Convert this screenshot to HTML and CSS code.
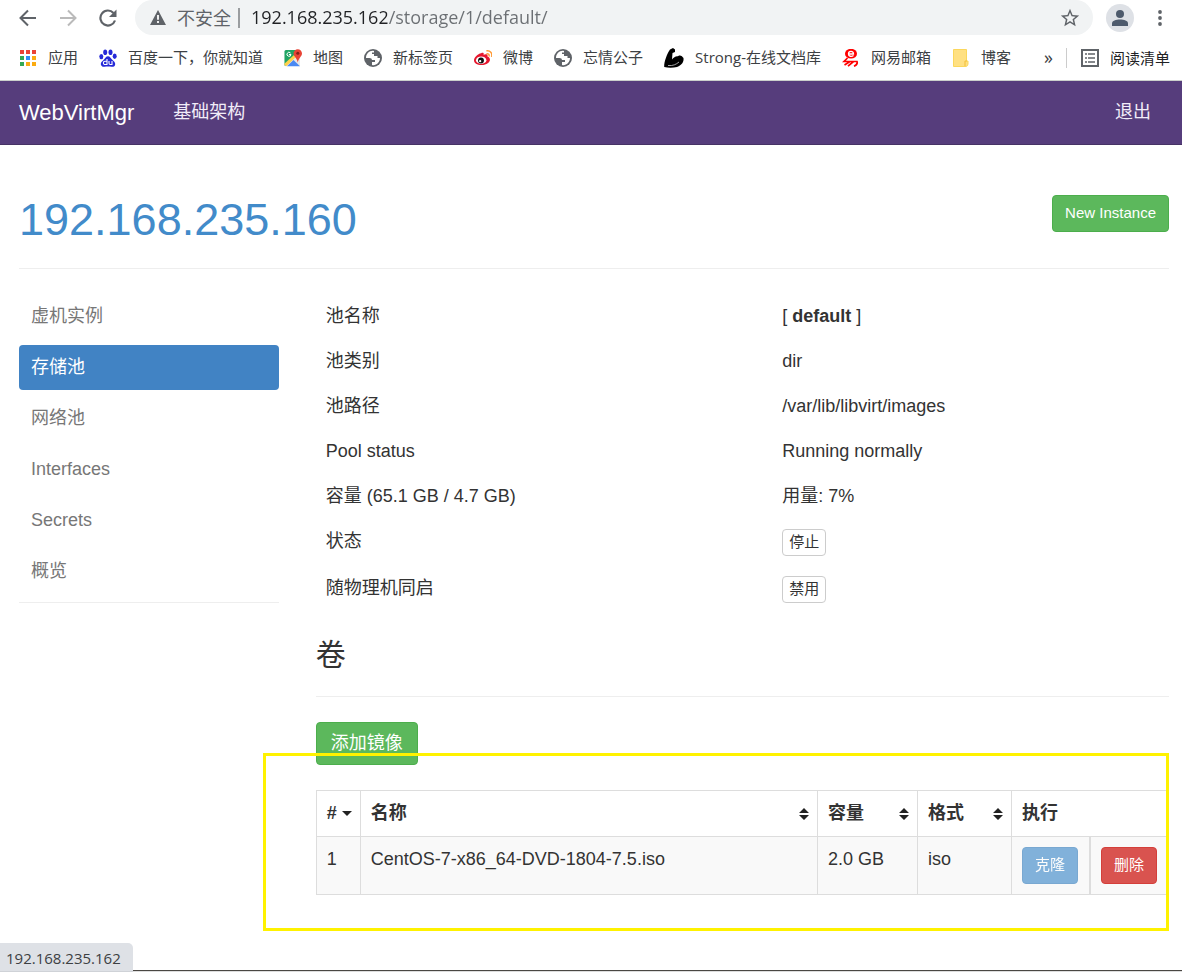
FILE: index.html
```html
<!DOCTYPE html>
<html lang="zh-CN">
<head>
    <meta charset="UTF-8">
    <meta name="viewport" content="width=device-width, initial-scale=1.0">
    <title>WebVirtMgr</title>
    <link rel="stylesheet" href="styles.css">
</head>
<body>
    <header class="browser">
        <div class="toolbar">
            <button class="tool" aria-label="后退">
                <svg width="18" height="18" viewBox="0 0 18 18" fill="none" stroke="#5f6368" stroke-width="2"><path d="M17 9H2M9 1.500L1.500 9l7.500 7.500"/></svg>
            </button>
            <button class="tool" aria-label="前进">
                <svg width="18" height="18" viewBox="0 0 18 18" fill="none" stroke="#bababa" stroke-width="2"><path d="M1 9h15M9 1.500L16.500 9 9 16.500"/></svg>
            </button>
            <button class="tool" aria-label="重新加载">
                <svg width="18" height="18" viewBox="0 0 18 18"><path d="M14.500 4A7.500 7.500 0 1 0 16 11.500" fill="none" stroke="#5f6368" stroke-width="2.200"/><path d="M17.500 .500v7.500H10z" fill="#5f6368"/></svg>
            </button>
            <div class="omnibox">
                <button class="security">
                    <svg width="16" height="15" viewBox="0 0 16 15"><path d="M8 0l8 15H0z" fill="#5f6368"/><path d="M7.100 5h1.800v4.800H7.100zM7.100 11h1.800v1.900H7.100z" fill="#fff"/></svg>
                    <span>不安全</span>
                </button>
                <input class="address" type="text" aria-label="地址" value="192.168.235.162/storage/1/default/">
                <button class="star" aria-label="收藏">
                    <svg width="22" height="22" viewBox="0 0 24 24" fill="#5f6368"><path d="M22 9.240l-7.190-.620L12 2 9.190 8.630 2 9.240l5.460 4.730L5.820 21 12 17.270 18.180 21l-1.630-7.030L22 9.240zM12 15.400l-3.760 2.270 1-4.280-3.320-2.880 4.380-.380L12 6.100l1.710 4.040 4.380.380-3.320 2.880 1 4.280L12 15.400z"/></svg>
                </button>
            </div>
            <button class="avatar" aria-label="用户">
                <svg width="16" height="16" viewBox="0 0 16 16" fill="#4d5a6c"><circle cx="8" cy="4" r="4"/><path d="M0 16v-2.500C0 10.500 4 9.500 8 9.500s8 1 8 4V16z"/></svg>
            </button>
            <button class="more" aria-label="更多">
                <svg width="4" height="16" viewBox="0 0 4 16" fill="#5f6368"><circle cx="2" cy="2" r="1.900"/><circle cx="2" cy="8" r="1.900"/><circle cx="2" cy="14" r="1.900"/></svg>
            </button>
        </div>

        <nav class="bookmarks">
            <a href="#">
                <svg width="18" height="18" viewBox="0 0 18 18"><path d="M1 1h4v4H1zM7 1h4v4H7zM13 1h4v4h-4z" fill="#ea4335"/><path d="M1 7h4v4H1zM1 13h4v4H1z" fill="#34a853"/><path d="M7 7h4v4H7z" fill="#2f8df5"/><path d="M13 7h4v4h-4zM7 13h4v4H7zM13 13h4v4h-4z" fill="#fbab10"/></svg>
                应用
            </a>
            <a href="#">
                <svg width="18" height="18" viewBox="0 0 18 18"><g fill="#2529d8"><ellipse cx="2.300" cy="7.600" rx="2" ry="2.700"/><ellipse cx="6.200" cy="3.200" rx="2" ry="2.800"/><ellipse cx="11.500" cy="3.200" rx="2" ry="2.800"/><ellipse cx="15.700" cy="7.200" rx="2" ry="2.700"/><path d="M9 7.200c2 0 2.800 2 4 3.200 1.800 1.800 3.400 2.600 3.200 4.800-.200 2-1.700 2.800-3.700 2.500-2.400-.400-4.600-.400-7 0-2 .300-3.500-.700-3.700-2.500-.200-2.200 1.500-3 3.200-4.800C6.200 9.200 7 7.200 9 7.200z"/></g><path d="M8 10v5.500H6a1.500 1.500 0 0 1 0-3.200h2M10 12v2.300q0 1.200 1.200 1.200h1.800V12" fill="none" stroke="#fff" stroke-width="1.100"/></svg>
                百度一下，你就知道
            </a>
            <a href="#">
                <svg width="18" height="18" viewBox="0 0 18 18"><path d="M2 1h14v16H2q-1.500 0-1.500-1.500v-13Q.500 1 2 1z" fill="#e8e8e8"/><path d="M2 1h10L11 8 1 17Q.500 16.500.500 15.500v-13Q.500 1 2 1z" fill="#1fa463"/><path d="M0 15L10 6l2 2-10 9.500z" fill="#ffd04b"/><path d="M3 17.200l6.500-6.200 6.500 6.200z" fill="#4a89f3"/><path d="M9.500 4.500a4.200 4.200 0 0 1 8.500 0c0 3-3.300 4-4.200 9-1-5-4.300-6-4.300-9z" fill="#e84335"/><circle cx="13.800" cy="4.300" r="1.500" fill="#801f18"/><path d="M6.500 4A2 2 0 1 0 7 5.500H5" fill="none" stroke="#fff"/></svg>
                地图
            </a>
            <a href="#">
                <svg width="18" height="18" viewBox="0 0 18 18"><circle cx="9" cy="9" r="9" fill="#5f6368"/><path d="M10 2C6 1 2 4.500 2 9h3.500q2.500 0 2.500 2h3v2H8v3c4 1 8-2.500 8-7h-2.500V7H10V5H8V3.500h2z" fill="#fff"/></svg>
                新标签页
            </a>
            <a href="#">
                <svg width="18" height="18" viewBox="0 0 19 18"><path d="M7.500 4c2-1.200 3.300-.300 2.500 1.600 2-.900 5-1 4.200 1.700 5.500 2.200 2 9.200-6.200 9.200-5 0-8-2-8-5C0 8.500 4 4.500 7.500 4z" fill="#e6162d"/><ellipse cx="7.600" cy="11.300" rx="5.500" ry="4" fill="#fff"/><circle cx="7.400" cy="11.700" r="3.100" fill="#111"/><circle cx="6.500" cy="12.400" r="1.200" fill="#fff"/><path d="M13 1.500c4-.800 6.800 2.500 5.500 6.300M13.200 4.500c2-.400 3.300 1 2.600 2.800" fill="none" stroke="#ff9933" stroke-width="1.500"/></svg>
                微博
            </a>
            <a href="#">
                <svg width="18" height="18" viewBox="0 0 18 18"><circle cx="9" cy="9" r="9" fill="#5f6368"/><path d="M10 2C6 1 2 4.500 2 9h3.500q2.500 0 2.500 2h3v2H8v3c4 1 8-2.500 8-7h-2.500V7H10V5H8V3.500h2z" fill="#fff"/></svg>
                忘情公子
            </a>
            <a href="#">
                <svg width="20" height="20" viewBox="0 0 20 20"><path d="M6 1.500L9 0l2 1.500V4L8.500 5 8 11.500C11 7.500 13.500 9 15 7.500c2-.500 3.500 1 4.500 2.500.500 4-1.500 7-6.500 9-4 1-9 1-12.800 0C0 13.500 3 6 6 1.500z" fill="#000"/><path d="M4 17.500c5 .500 8-1 11-3.500" fill="none" stroke="#ccc" stroke-width=".800"/></svg>
                Strong-在线文档库
            </a>
            <a href="#">
                <svg width="18" height="18" viewBox="0 0 18 18"><ellipse cx="9" cy="4.700" rx="6" ry="4.900" fill="#f00"/><path d="M6.500 5h5c0-3.500-5-3.500-5 0 0 2.500 3 3 5 1.500" fill="none" stroke="#fff" stroke-width="1.300"/><path d="M5.500 9L2 12.500h13q1 3-3 4.700M8 12.500L2.500 16M11.500 12.500L6 17.200" fill="none" stroke="#f00" stroke-width="1.700"/></svg>
                网易邮箱
            </a>
            <a href="#">
                <svg width="18" height="18" viewBox="0 0 18 18"><path d="M1.500.500h13v11.500h1.500v3q0 2-2 2.500H1.500z" fill="#ffe082" stroke="#fbd75c"/><path d="M13 17v-5h2" fill="none" stroke="#f2bf36"/></svg>
                博客
            </a>
            <button class="overflow" aria-label="更多书签">»</button>
            <a class="reading" href="#">
                <svg width="18" height="18" viewBox="0 0 18 18"><path d="M1 1h16v16H1z" fill="none" stroke="#5f6368" stroke-width="2"/><path d="M4 5h2M7 5h7M4 9h2M7 9h7M4 13h2M7 13h7" stroke="#5f6368" stroke-width="1.600"/></svg>
                阅读清单
            </a>
        </nav>
    </header>

    <nav class="navbar">
        <a class="brand" href="#">WebVirtMgr</a>
        <a href="#">基础架构</a>
        <a class="logout" href="#">退出</a>
    </nav>

    <main class="container">
        <div class="page-header">
            <h1><a href="#">192.168.235.160</a></h1>
            <button class="btn btn-success">New Instance</button>
        </div>

        <div class="row">
            <nav class="sidebar">
                <a href="#">虚机实例</a>
                <a class="active" href="#">存储池</a>
                <a href="#">网络池</a>
                <a href="#">Interfaces</a>
                <a href="#">Secrets</a>
                <a href="#">概览</a>
            </nav>

            <section class="content">
                <table class="details">
                    <tr><td>池名称</td><td>[ <b>default</b> ]</td></tr>
                    <tr><td>池类别</td><td>dir</td></tr>
                    <tr><td>池路径</td><td>/var/lib/libvirt/images</td></tr>
                    <tr><td>Pool status</td><td>Running normally</td></tr>
                    <tr><td>容量 (65.1 GB / 4.7 GB)</td><td>用量: 7%</td></tr>
                    <tr><td>状态</td><td><button class="btn btn-xs">停止</button></td></tr>
                    <tr><td>随物理机同启</td><td><button class="btn btn-xs">禁用</button></td></tr>
                </table>

                <h2>卷</h2>
                <button class="btn btn-success btn-lg">添加镜像</button>

                <div class="volumes-wrap">
                    <table class="volumes">
                        <thead>
                            <tr>
                                <th class="col-id"><div># <svg width="10" height="6" viewBox="0 0 10 6"><path d="M0 0h10L5 5z" fill="#222"/></svg></div></th>
                                <th><div>名称 <svg width="10" height="12" viewBox="0 0 10 12"><path d="M5 0l5 5H0zM0 7h10l-5 5z" fill="#222"/></svg></div></th>
                                <th class="col-size"><div>容量 <svg width="10" height="12" viewBox="0 0 10 12"><path d="M5 0l5 5H0zM0 7h10l-5 5z" fill="#222"/></svg></div></th>
                                <th class="col-format"><div>格式 <svg width="10" height="12" viewBox="0 0 10 12"><path d="M5 0l5 5H0zM0 7h10l-5 5z" fill="#222"/></svg></div></th>
                                <th class="col-actions" colspan="2">执行</th>
                            </tr>
                        </thead>
                        <tbody>
                            <tr>
                                <td>1</td>
                                <td>CentOS-7-x86_64-DVD-1804-7.5.iso</td>
                                <td>2.0 GB</td>
                                <td>iso</td>
                                <td><button class="btn btn-primary" disabled>克隆</button></td>
                                <td class="delete"><button class="btn btn-danger">删除</button></td>
                            </tr>
                        </tbody>
                    </table>
                    <div class="highlight"></div>
                </div>
            </section>
        </div>
    </main>

    <div class="window-edge"></div>
    <div class="link-status">192.168.235.162</div>
</body>
</html>
```

FILE: styles.css
```css
* {
    box-sizing: border-box;
}
body {
    display: flex;
    flex-direction: column;
    min-height: 100vh;
    margin: 0;
    background: #fff;
    color: #333;
    font: 18px/25px "Liberation Sans", "Noto Sans CJK SC", sans-serif;
}
a {
    color: #428bca;
    text-decoration: none;
}
button,
input {
    margin: 0;
    padding: 0;
    border: 0;
    background: none;
    color: inherit;
    font: inherit;
}
svg {
    flex: none;
    display: block;
}

/* browser chrome */
.browser {
    border-bottom: 1px solid #cbd0cc;
    font-family: "Open Sans", "Noto Sans CJK SC", sans-serif;
}
.toolbar {
    display: flex;
    align-items: center;
    height: 35px;
    padding: 0 20px 0 19px;
}
.tool {
    margin-right: 22px;
}
.omnibox {
    flex: 1;
    display: flex;
    align-items: center;
    height: 35px;
    margin-left: -4px;
    padding: 0 12px 0 15px;
    border-radius: 18px;
    background: #f1f3f4;
}
.security {
    display: flex;
    align-items: center;
    gap: 11px;
    padding-right: 7px;
    border-right: 2px solid #9a9da0;
    color: #5f6368;
    line-height: 20px;
}
.address {
    flex: 1;
    min-width: 0;
    margin-left: 11px;
    outline: 0;
    color: #5f6368;
    /* host part dark, path grey */
    background: linear-gradient(90deg, #202124 136px, #6b6f73 136px);
    -webkit-background-clip: text;
    background-clip: text;
    -webkit-text-fill-color: transparent;
}
.avatar {
    display: grid;
    place-items: center;
    width: 28px;
    height: 28px;
    margin: 0 24px 0 13px;
    border-radius: 50%;
    background: #dee1e6;
}
.bookmarks {
    display: flex;
    align-items: center;
    gap: 21px;
    height: 45px;
    padding: 0 12px 0 19px;
    color: #3c4043;
    font-size: 15px;
    white-space: nowrap;
}
.bookmarks a {
    display: flex;
    align-items: center;
    gap: 11px;
    color: #3c4043;
}
.overflow {
    margin-left: auto;
    font-size: 18px;
}
.bookmarks .reading {
    margin-left: -8px;
    padding-left: 14px;
    border-left: 1px solid #ccc;
    color: #202124;
    line-height: 20px;
}

/* navbar */
.navbar {
    display: flex;
    align-items: center;
    gap: 39px;
    height: 64px;
    padding: 0 31px 0 19px;
    border-bottom: 1px solid #463265;
    background: #563d7c;
}
.navbar a {
    color: #f1ecf8;
}
.navbar .brand {
    color: #fff;
    font-size: 22px;
}
.navbar .logout {
    margin-left: auto;
}

.container {
    flex: 1;
    padding: 50px 13px 40px 19px;
}
.page-header {
    display: flex;
    justify-content: space-between;
    align-items: flex-start;
    padding-bottom: 23px;
    border-bottom: 1px solid #eee;
}
h1 {
    margin: 0;
    font-size: 45px;
    font-weight: normal;
    line-height: 50px;
}
.row {
    display: grid;
    grid-template-columns: repeat(12, minmax(0, 1fr));
    align-items: start;
    gap: 37px;
    padding-top: 25px;
}
.sidebar {
    grid-column: span 3;
    display: flex;
    flex-direction: column;
    gap: 6px;
    padding-bottom: 8px;
    border-bottom: 1px solid #eee;
}
.sidebar a {
    padding: 10px 12px;
    border-radius: 4px;
    color: #777;
}
.sidebar .active {
    background: #4183c4;
    color: #fff;
}
.content {
    grid-column: span 9;
}

.btn {
    padding: 6px 12px 8px;
    border: 1px solid #ccc;
    border-radius: 4px;
    background: #fff;
    color: #333;
    font-size: 15px;
    line-height: 21px;
    cursor: pointer;
}
.btn-success {
    border-color: #4cae4c;
    background: #5cb85c;
    color: #fff;
}
.btn-primary {
    border-color: #357ebd;
    background: #428bca;
    color: #fff;
}
.btn-danger {
    border-color: #d43f3a;
    background: #d9534f;
    color: #fff;
}
.btn:disabled {
    opacity: .65;
    cursor: not-allowed;
}
.btn-xs {
    display: block;
    padding: 1px 6px 3px;
}
.btn-lg {
    display: block;
    padding: 8px 14px;
    font-size: 18px;
    line-height: 25px;
}

table {
    width: 100%;
    border-collapse: collapse;
}
th,
td {
    padding: 10px;
    text-align: left;
    vertical-align: top;
}
.details td:first-child {
    width: 53.5%;
}
h2 {
    margin: 0 0 25px;
    padding: 24px 0;
    border-bottom: 1px solid #eee;
    font-size: 30px;
    font-weight: normal;
    line-height: 35px;
}

.volumes-wrap {
    position: relative;
    margin-top: 25px;
}
.volumes {
    table-layout: fixed;
}
.volumes th,
.volumes td {
    border: 1px solid #ddd;
}
.volumes th div {
    display: flex;
    justify-content: space-between;
    align-items: center;
    margin-right: -2px;
}
.volumes tbody td {
    background: #f9f9f9;
}
.volumes .delete {
    border-left-width: 2px;
}
.col-id {
    width: 44px;
}
.col-size {
    width: 100px;
}
.col-format {
    width: 94px;
}
.col-actions {
    width: 157px;
}
.volumes .btn {
    display: block;
}
/* marker frame drawn over the volume list */
.highlight {
    position: absolute;
    inset: -37px 0 -36px -53px;
    border: 3px solid #fff200;
    pointer-events: none;
}

.window-edge {
    height: 2px;
    border-top: 1px solid #4a4743;
    background: #ddd;
}
.link-status {
    position: fixed;
    left: 0;
    bottom: 0;
    padding: 3px 12px 1px 6px;
    border: 1px solid #cfd2d7;
    border-width: 0 0 1px;
    border-radius: 0 5px 0 0;
    background: #dee1e6;
    color: #3c4043;
    font: 15px/24px "Open Sans", sans-serif;
}
```
